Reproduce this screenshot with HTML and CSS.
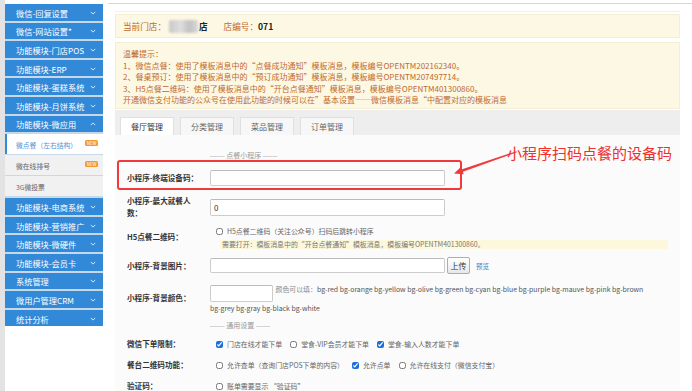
FILE: index.html
```html
<!DOCTYPE html>
<html lang="zh-CN">
<head>
<meta charset="utf-8">
<title>微点餐 - 餐厅管理</title>
<link rel="stylesheet" href="styles.css">
</head>
<body>
<div class="rail"></div>

<nav class="side">
  <div class="menu">
    <a class="item">微信-回复设置<svg class="chev" viewBox="0 0 8 5"><path d="M1 1l3 3 3-3"/></svg></a>
    <a class="item">微信-网站设置*<svg class="chev" viewBox="0 0 8 5"><path d="M1 1l3 3 3-3"/></svg></a>
    <a class="item">功能模块-门店POS<svg class="chev" viewBox="0 0 8 5"><path d="M1 1l3 3 3-3"/></svg></a>
    <a class="item">功能模块-ERP<svg class="chev" viewBox="0 0 8 5"><path d="M1 1l3 3 3-3"/></svg></a>
    <a class="item">功能模块-蛋糕系统<svg class="chev" viewBox="0 0 8 5"><path d="M1 1l3 3 3-3"/></svg></a>
    <a class="item">功能模块-月饼系统<svg class="chev" viewBox="0 0 8 5"><path d="M1 1l3 3 3-3"/></svg></a>
    <a class="item">功能模块-微应用<svg class="chev" viewBox="0 0 8 5"><path d="M1 4l3-3 3 3"/></svg></a>
    <div class="sub">
      <a class="on">微点餐（左右结构）<span class="new">NEW</span></a>
      <a>微在线排号<span class="new">NEW</span></a>
      <a>3G微投票</a>
    </div>
    <a class="item">功能模块-电商系统<svg class="chev" viewBox="0 0 8 5"><path d="M1 1l3 3 3-3"/></svg></a>
    <a class="item">功能模块-营销推广<svg class="chev" viewBox="0 0 8 5"><path d="M1 1l3 3 3-3"/></svg></a>
    <a class="item">功能模块-微硬件<svg class="chev" viewBox="0 0 8 5"><path d="M1 1l3 3 3-3"/></svg></a>
    <a class="item">功能模块-会员卡<svg class="chev" viewBox="0 0 8 5"><path d="M1 1l3 3 3-3"/></svg></a>
    <a class="item">系统管理<svg class="chev" viewBox="0 0 8 5"><path d="M1 1l3 3 3-3"/></svg></a>
    <a class="item">微用户管理CRM<svg class="chev" viewBox="0 0 8 5"><path d="M1 1l3 3 3-3"/></svg></a>
    <a class="item">统计分析<svg class="chev" viewBox="0 0 8 5"><path d="M1 1l3 3 3-3"/></svg></a>
  </div>
</nav>

<main class="main">
  <div class="crumb"></div>
  <div class="wrap">
    <div class="store">当前门店：<span class="blur"></span><b>店</b><span class="no">店编号：<b>071</b></span></div>

    <div class="notice">
      <p>温馨提示：</p>
      <p>1、微信点餐：使用了模板消息中的“点餐成功通知”模板消息，模板编号OPENTM202162340。</p>
      <p>2、餐桌预订：使用了模板消息中的“预订成功通知”模板消息，模板编号OPENTM207497714。</p>
      <p>3、H5点餐二维码：使用了模板消息中的“开台点餐通知”模板消息，模板编号OPENTM401300860。</p>
      <p>开通微信支付功能的公众号在使用此功能的时候可以在”基本设置——微信模板消息“中配置对应的模板消息</p>
    </div>
  </div>

  <div class="tabs">
    <span class="tab on">餐厅管理</span>
    <span class="tab">分类管理</span>
    <span class="tab">菜品管理</span>
    <span class="tab">订单管理</span>
  </div>

  <div class="panel">
    <div class="sec">------ 点餐小程序 ------</div>

    <div class="row r1">
      <label class="lab">小程序-终端设备码：</label>
      <div class="ctl inputs"><input class="txt" type="text"></div>
    </div>

    <div class="row">
      <label class="lab">小程序-最大就餐人数：</label>
      <div class="ctl inputs"><input class="txt tall" type="text" value="0"></div>
    </div>

    <div class="row">
      <label class="lab">H5点餐二维码：</label>
      <div class="ctl">
        <div class="checks"><span class="ck"><input type="checkbox">H5点餐二维码（关注公众号）扫码后跳转小程序</span></div>
        <div class="hint">需要打开：模板消息中的“开台点餐通知”模板消息，模板编号OPENTM401300860。</div>
      </div>
    </div>

    <div class="row r20">
      <label class="lab">小程序-背景图片：</label>
      <div class="ctl inputs"><input class="txt short" type="text"><button class="up">上传</button><a class="view">预览</a></div>
    </div>

    <div class="row">
      <label class="lab">小程序-背景颜色：</label>
      <div class="ctl colors"><input class="txt color" type="text"> <span class="gray">颜色可以填：</span><span>bg-red</span> <span>bg-orange</span> <span>bg-yellow</span> <span>bg-olive</span> <span>bg-green</span> <span>bg-cyan</span> <span>bg-blue</span> <span>bg-purple</span> <span>bg-mauve</span> <span>bg-pink</span> <span>bg-brown</span> <span>bg-grey</span> <span>bg-gray</span> <span>bg-black</span> <span>bg-white</span></div>
    </div>

    <div class="sec sec2">------ 通用设置 ------</div>

    <div class="row opt">
      <label class="lab">微信下单限制：</label>
      <div class="ctl checks">
        <span class="ck"><input type="checkbox" checked>门店在线才能下单</span>
        <span class="ck"><input type="checkbox">堂食-VIP会员才能下单</span>
        <span class="ck"><input type="checkbox" checked>堂食-输入人数才能下单</span>
      </div>
    </div>

    <div class="row opt">
      <label class="lab">餐台二维码功能：</label>
      <div class="ctl checks">
        <span class="ck"><input type="checkbox">允许查单（查询门店POS下单的内容）</span>
        <span class="ck"><input type="checkbox" checked>允许点单</span>
        <span class="ck"><input type="checkbox">允许在线支付（微信支付宝）</span>
      </div>
    </div>

    <div class="row opt">
      <label class="lab">验证码：</label>
      <div class="ctl checks">
        <span class="ck"><input type="checkbox">账单需要显示 “验证码”</span>
      </div>
    </div>
  </div>
</main>

<!-- annotation drawn over the screenshot -->
<div class="callout"></div>
<svg class="arrow" viewBox="0 0 90 50"><polygon points="14,33.5 21.2,26.7 22.1,29.3 76.5,11.2 76.9,12.2 22.9,31.7 23.8,34.3"/></svg>
<div class="note">小程序扫码点餐的设备码</div>
</body>
</html>
```

FILE: styles.css
```css
* {box-sizing: border-box;}
html, body {margin: 0; height: 100%; overflow: hidden;}
body {display: flex; position: relative; background: #fff; color: #333; font-family: "Noto Sans CJK SC", sans-serif;}
a {text-decoration: none;}

.rail {width: 5px; flex: none; background: #e3e3e3;}

/* sidebar */
.side {width: 98px; flex: none; padding-top: 4px;}
.menu {display: flex; flex-direction: column; gap: 2px; background: #c7d8e8;}
.item {
    height: 16.6px;
    display: flex;
    align-items: center;
    justify-content: space-between;
    padding: 1px 7px 0 11px;
    background: #3189d8;
    color: #fff;
    font-size: 8.2px;
    white-space: nowrap;
}
.chev {width: 6px; height: 4px; fill: none; stroke: #fff; stroke-width: 1.1;}
.sub {display: flex; flex-direction: column; gap: 1px;}
.sub a {
    height: 20px;
    display: flex;
    align-items: center;
    justify-content: space-between;
    padding: 2px 5px 0 11px;
    background: #f1f1f2;
    color: #666;
    font-size: 6.8px;
    white-space: nowrap;
}
.sub a.on {background: #fff; color: #4f93d8; border-left: 2px solid #3189d8; padding-left: 9px;}
.new {
    background: #f39a2c;
    color: #fff;
    font-size: 4.5px;
    line-height: 6px;
    padding: 0 1.5px;
    border-radius: 1.5px;
    margin-top: -4px;
}

/* main */
.main {flex: 1; min-width: 0; display: flex; flex-direction: column; padding: 0 12px;}
.crumb {height: 4px; flex: none; margin: 0 -12px 0 -7px; border-bottom: 1px solid #d6d6d6;}
.wrap {margin-top: 7px; border-top: 1px solid #f0f0f0; padding-top: 2px; flex: none;}
.store {
    height: 24px;
    display: flex;
    align-items: center;
    padding: 0 7px;
    background: #fcf8e3;
    border: 1px solid #f6eed2;
    font-size: 8.6px;
    color: #c0692f;
}
.store b {color: #222;}
.blur {
    width: 29px;
    height: 13px;
    margin: 0 1px 0 3px;
    border-radius: 2px;
    background: linear-gradient(90deg, #c9c9c9, #dedede 40%, #c2c2c2 70%, #d9d9d9);
    filter: blur(0.8px);
}
.store .no {margin-left: 16px;}

.notice {
    margin-top: 4px;
    height: 67px;
    padding: 5px 7px;
    background: #fcf8e3;
    border: 1px solid #f6eed2;
    font-size: 8px;
    line-height: 11.6px;
    color: #c0692f;
}
.notice p {margin: 0; white-space: nowrap; overflow: hidden;}

.tabs {
    flex: none;
    margin-top: 1px;
    height: 25px;
    display: flex;
    align-items: flex-end;
    gap: 6px;
    padding-left: 5px;
    background: #eee;
}
.tab {
    width: 54px;
    height: 18.5px;
    display: flex;
    align-items: center;
    justify-content: center;
    background: #f7f7f7;
    border: 1px solid #e0e0e0;
    border-bottom: 0;
    font-size: 8px;
    color: #666;
}
.tab.on {background: #fff; color: #333;}

/* form */
.panel {flex: 1; background: #fbfbfb; padding: 15px 12px 0;}
.sec {margin-left: 83px; font-size: 7px; line-height: 10px; color: #999; white-space: nowrap;}
.sec2 {margin-top: 6px;}
.row {display: flex; align-items: center; margin-top: 7px;}
.r1 {margin-top: 8px; min-height: 20px;}
.r20 {min-height: 20px;}
.opt {margin-top: 0; height: 21px;}
.sec2 + .opt {margin-top: 4px;}
.lab {width: 75px; margin-right: 8px; flex: none; font-size: 7.6px; font-weight: bold; line-height: 12px; color: #333;}
.ctl {flex: 1; min-width: 0; font-size: 8px; line-height: 10px;}
.ctl.inputs {display: flex; align-items: center;}

.txt {
    display: inline-block;
    width: 235px;
    height: 16px;
    margin: 0;
    padding: 0 3px;
    vertical-align: middle;
    background: #fff;
    border: 1px solid #ccc;
    border-top-color: #bbb;
    border-radius: 2px;
    font: 8px "Noto Sans CJK SC", sans-serif;
    color: #333;
}
.tall {height: 17px;}
.short {height: 15px;}
.color {width: 63px; height: 17px;}
.up {
    height: 17px;
    width: 23px;
    margin-left: 2px;
    padding: 0;
    background: linear-gradient(#fff, #e8e8e8);
    border: 1px solid #adadad;
    border-radius: 2px;
    font: 8px "Noto Sans CJK SC", sans-serif;
    color: #333;
}
.view {margin-left: 6px; font-size: 6.5px; color: #3b7fc4;}

.colors {font-size: 6.9px; line-height: 12px; color: #555; padding-right: 2px;}
.colors span {white-space: nowrap;}
.colors .txt {margin-right: 1px; vertical-align: -5px;}
.gray {color: #888;}

.checks {display: flex; align-items: center; padding-left: 6px; font-size: 6.9px; line-height: 10px; color: #666; white-space: nowrap;}
.ck {display: inline-flex; align-items: center; margin-right: 8px;}
.ck input {width: 7px; height: 7px; margin: 0 4px 0 0; accent-color: #1b6fd8;}
.hint {
    margin: 3.5px 0 0 10px;
    padding-left: 2px;
    background: #fdf8dc;
    font-size: 6.9px;
    line-height: 9px;
    color: #777;
    white-space: nowrap;
}

/* annotation */
.callout {position: absolute; left: 117px; top: 160px; width: 345px; height: 30px; border: 2px solid #f0393a; border-radius: 3px;}
.arrow {position: absolute; left: 440px; top: 140px; width: 90px; height: 50px; fill: #f0393a;}
.note {position: absolute; left: 507px; top: 143px; font-size: 15px; line-height: 20px; color: #f0302c; white-space: nowrap;}
```
